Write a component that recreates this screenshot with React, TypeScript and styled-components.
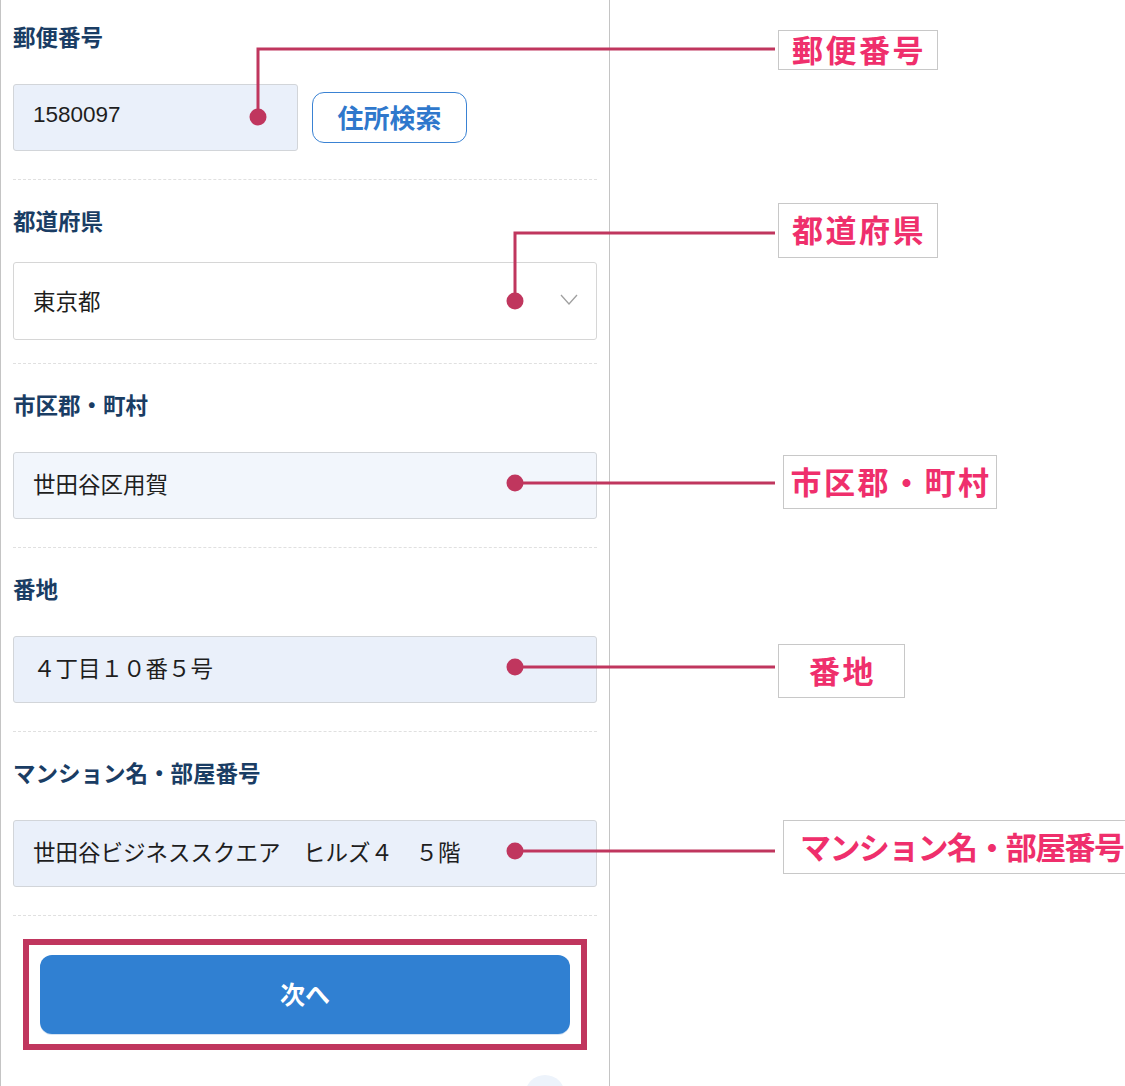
import React from 'react'
import styled, { createGlobalStyle } from 'styled-components'

const GlobalStyles = createGlobalStyle`
  html, body {
    margin: 0;
    padding: 0;
    background: #fff;
  }
  body {
    font-family: "Noto Sans CJK JP", sans-serif;
    overflow: hidden;
  }
`

const Page = styled.div`
  position: relative;
  display: flex;
  width: 1125px;
  height: 1086px;
  overflow: hidden;
  background: #fff;
`

const FormPanel = styled.div`
  box-sizing: border-box;
  width: 610px;
  height: 100%;
  padding: 0 12px;
  border-left: 1px solid #c4c4c4;
  border-right: 1px solid #c4c4c4;
`

const Section = styled.section<{ $first?: boolean }>`
  padding: ${p => (p.$first ? '21px' : '25px')} 0 23px;
  border-bottom: 1px dashed #e0e0e0;
`

const Label = styled.div`
  height: 30px;
  margin-bottom: 27px;
  font-size: 22.5px;
  line-height: 30px;
  font-weight: 700;
  color: #1a3d64;
  white-space: nowrap;
`

const FieldRow = styled.div`
  display: flex;
  align-items: center;
  gap: 14px;
  height: 78px;
`

const TextField = styled.input<{ $tone?: 'light' | 'normal'; $width?: number }>`
  box-sizing: border-box;
  width: ${p => (p.$width ? `${p.$width}px` : '100%')};
  height: 67px;
  padding: 0 19px 4px;
  border: 1px solid #d2d5d9;
  border-radius: 3px;
  background: ${p => (p.$tone === 'light' ? '#f2f6fc' : '#eaf0fa')};
  font-family: "Liberation Sans", "Noto Sans CJK JP", sans-serif;
  font-size: 22.5px;
  color: #1e1e1e;
  outline: none;
`

const SelectBox = styled.div`
  box-sizing: border-box;
  display: flex;
  align-items: center;
  justify-content: space-between;
  width: 100%;
  height: 78px;
  padding: 0 18px 3px 19px;
  border: 1px solid #d6d6d6;
  border-radius: 3px;
  background: #fff;
  font-family: "Liberation Sans", "Noto Sans CJK JP", sans-serif;
  font-size: 22.5px;
  color: #1e1e1e;
`

const SearchButton = styled.button`
  box-sizing: border-box;
  width: 155px;
  height: 51px;
  padding: 0 0 2px;
  border: 1.5px solid #3a82d3;
  border-radius: 12px;
  background: #fff;
  font-family: "Noto Sans CJK JP", sans-serif;
  font-size: 26px;
  font-weight: 700;
  color: #2f78cc;
`

const SubmitFrame = styled.div`
  margin: 23px 10px 0;
  padding: 10px 11px;
  border: 6px solid #c0365e;
`

const SubmitButton = styled.button`
  display: block;
  width: 100%;
  height: 79px;
  padding: 0 0 4px;
  border: none;
  border-radius: 12px;
  background: #3080d2;
  box-shadow: 0 1px 0 #d5e3f3;
  font-family: "Noto Sans CJK JP", sans-serif;
  font-size: 25px;
  font-weight: 700;
  color: #fff;
`

const LeaderLines = styled.svg`
  position: absolute;
  left: 0;
  top: 0;
  pointer-events: none;
`

const Callout = styled.div<{ $x: number; $y: number; $w: number; $h: number; $start?: boolean }>`
  position: absolute;
  left: ${p => p.$x}px;
  top: ${p => p.$y}px;
  width: ${p => p.$w}px;
  height: ${p => p.$h}px;
  box-sizing: border-box;
  display: flex;
  align-items: center;
  justify-content: ${p => (p.$start ? 'flex-start' : 'center')};
  padding: 0 0 4px ${p => (p.$start ? '16px' : '2px')};
  border: 1px solid #c8c8c8;
  background: #fff;
  font-family: "Noto Sans CJK JP", sans-serif;
  font-size: 31px;
  font-weight: 700;
  line-height: 1;
  letter-spacing: ${p => (p.$start ? '-1.6px' : '2.5px')};
  color: #ef2f6c;
  white-space: nowrap;
`

const FloatBubble = styled.div`
  position: absolute;
  left: 525px;
  top: 1075px;
  width: 40px;
  height: 40px;
  border-radius: 50%;
  background: #edf3fb;
`

const Chevron = () => (
  <svg width="18" height="11" viewBox="0 0 18 11">
    <polyline points="1,1 9,10 17,1" fill="none" stroke="#a0a0a0" strokeWidth="1.3" />
  </svg>
)

const callouts = [
  { text: '郵便番号', x: 778, y: 30, w: 160, h: 40 },
  { text: '都道府県', x: 778, y: 203, w: 160, h: 55 },
  { text: '市区郡・町村', x: 783, y: 455, w: 214, h: 54 },
  { text: '番地', x: 778, y: 644, w: 127, h: 54 },
  { text: 'マンション名・部屋番号', x: 783, y: 820, w: 420, h: 54, start: true },
]

const leaders = [
  { d: 'M258 117 V49 H775', cx: 258, cy: 117 },
  { d: 'M515 301 V233 H775', cx: 515, cy: 301 },
  { d: 'M515 483 H775', cx: 515, cy: 483 },
  { d: 'M515 667 H775', cx: 515, cy: 667 },
  { d: 'M515 851 H775', cx: 515, cy: 851 },
]

const App = () => {
  return (
    <Page>
      <GlobalStyles/>
      <FormPanel>
        <Section $first>
          <Label>郵便番号</Label>
          <FieldRow>
            <TextField $width={285} readOnly defaultValue="1580097"/>
            <SearchButton>住所検索</SearchButton>
          </FieldRow>
        </Section>
        <Section>
          <Label>都道府県</Label>
          <FieldRow>
            <SelectBox>
              <span>東京都</span>
              <Chevron/>
            </SelectBox>
          </FieldRow>
        </Section>
        <Section>
          <Label>市区郡・町村</Label>
          <FieldRow>
            <TextField $tone="light" readOnly defaultValue="世田谷区用賀"/>
          </FieldRow>
        </Section>
        <Section>
          <Label>番地</Label>
          <FieldRow>
            <TextField readOnly defaultValue="４丁目１０番５号"/>
          </FieldRow>
        </Section>
        <Section>
          <Label>マンション名・部屋番号</Label>
          <FieldRow>
            <TextField readOnly defaultValue="世田谷ビジネススクエア　ヒルズ４　５階"/>
          </FieldRow>
        </Section>
        <SubmitFrame>
          <SubmitButton>次へ</SubmitButton>
        </SubmitFrame>
      </FormPanel>

      <FloatBubble/>

      <LeaderLines width="1125" height="1086" viewBox="0 0 1125 1086">
        {leaders.map(l => (
          <g key={l.d}>
            <path d={l.d} fill="none" stroke="#c0365e" strokeWidth="3"/>
            <circle cx={l.cx} cy={l.cy} r="8.5" fill="#c0365e"/>
          </g>
        ))}
      </LeaderLines>

      {callouts.map(c => (
        <Callout key={c.text} $x={c.x} $y={c.y} $w={c.w} $h={c.h} $start={c.start}>
          {c.text}
        </Callout>
      ))}
    </Page>
  )
}

export default App
